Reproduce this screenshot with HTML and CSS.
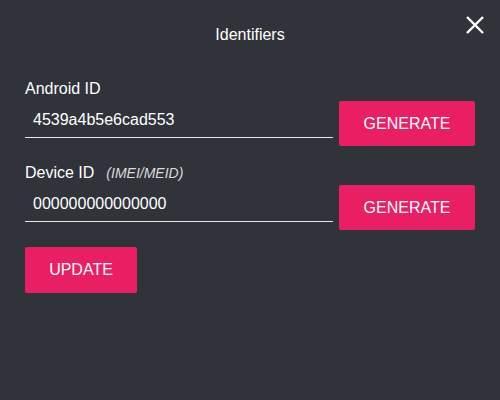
FILE: index.html
```html
<!DOCTYPE html>
<html>
<head>
<meta charset="utf-8">
<link rel="stylesheet" href="styles.css">
</head>
<body>
<div class="dialog">
  <header class="dialog-header">
    <h1 class="dialog-title">Identifiers</h1>
    <button class="close-btn" aria-label="Close">
      <svg width="18" height="18" viewBox="0 0 18 18"><path d="M1 1L17 17M17 1L1 17" stroke="#fff" stroke-width="2.4" fill="none"/></svg>
    </button>
  </header>
  <div class="form">
    <div class="field-row">
      <div class="field">
        <label class="field-label">Android ID</label>
        <input class="field-input" type="text" value="4539a4b5e6cad553" readonly>
      </div>
      <button class="btn btn-generate">GENERATE</button>
    </div>
    <div class="field-row">
      <div class="field">
        <label class="field-label">Device ID<span class="hint">(IMEI/MEID)</span></label>
        <input class="field-input" type="text" value="000000000000000" readonly>
      </div>
      <button class="btn btn-generate">GENERATE</button>
    </div>
    <div class="actions">
      <button class="btn btn-update">UPDATE</button>
    </div>
  </div>
</div>
</body>
</html>
```

FILE: styles.css
```css
html, body {
  margin: 0;
  padding: 0;
  background: #30333a;
  width: 500px;
  height: 400px;
  overflow: hidden;
}
body {
  font-family: "Liberation Sans", Arial, sans-serif;
  color: #fff;
}
.dialog {
  position: relative;
  padding: 0 25px;
}
.dialog-header {
  height: 80px;
  display: flex;
  justify-content: center;
}
.dialog-title {
  margin: 26px 0 0;
  font-size: 16px;
  font-weight: normal;
  line-height: 18px;
  color: #fff;
}
.close-btn {
  position: absolute;
  top: 16px;
  right: 16px;
  width: 18px;
  height: 18px;
  padding: 0;
  border: none;
  background: none;
  cursor: pointer;
}
.close-btn svg {
  display: block;
}
.field-row {
  display: flex;
  align-items: flex-start;
  gap: 6px;
  margin-bottom: 18px;
}
.field {
  width: 308px;
  display: flex;
  flex-direction: column;
}
.field-label {
  font-size: 16px;
  line-height: 18px;
  color: #fff;
}
.hint {
  margin-left: 12px;
  font-size: 14px;
  font-style: italic;
  color: #dcdcdc;
}
.field-input {
  box-sizing: border-box;
  margin: 10px 0 0;
  height: 30px;
  padding: 3px 8px 8px;
  border: none;
  border-bottom: 1px solid #e8e8e8;
  background: transparent;
  color: #fff;
  font-family: "Liberation Sans", Arial, sans-serif;
  font-size: 16px;
  line-height: 18px;
  outline: none;
}
.btn {
  border: none;
  border-radius: 2px;
  background: #e91e63;
  color: #fff;
  font-family: "Liberation Sans", Arial, sans-serif;
  font-size: 16px;
  padding: 0;
  cursor: pointer;
}
.btn-generate {
  width: 136px;
  height: 45px;
  margin-top: 21px;
}
.actions {
  margin-top: -1px;
}
.btn-update {
  width: 112px;
  height: 46px;
}
```
